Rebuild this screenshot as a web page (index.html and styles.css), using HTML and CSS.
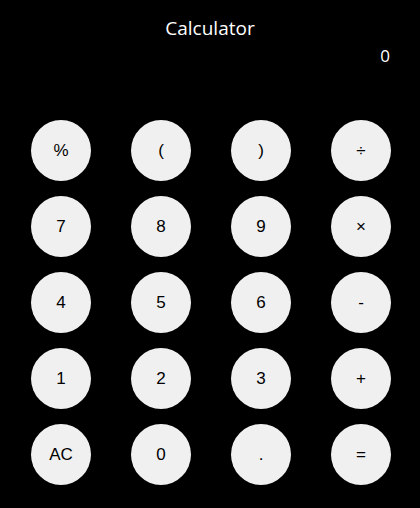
FILE: index.html
```html
<!DOCTYPE html>
<html lang="en">
<head>
    <meta charset="UTF-8">
    <meta name="viewport" content="width=device-width, initial-scale=1.0">
    <title>Calculator</title>
    <link rel="stylesheet" href="styles.css">
</head>
<body>

    <h1 class="title">Calculator</h1>
    <div class="display" id="display">0</div>

    <div class="keys">
        <button>%</button>
        <button>(</button>
        <button>)</button>
        <button>÷</button>
        <button>7</button>
        <button>8</button>
        <button>9</button>
        <button>×</button>
        <button>4</button>
        <button>5</button>
        <button>6</button>
        <button>-</button>
        <button>1</button>
        <button>2</button>
        <button>3</button>
        <button>+</button>
        <button>AC</button>
        <button>0</button>
        <button>.</button>
        <button>=</button>
    </div>

</body>
</html>
```

FILE: styles.css
```css
body {
    margin: 0;
    background-color: #000;
    color: #fff;
    font-family: "Open Sans", "Noto Sans", sans-serif;
}
.title {
    margin: 0;
    padding-top: 14px;
    font-size: 19px;
    font-weight: normal;
    text-align: center;
    line-height: 28px;
}
.display {
    padding-right: 30px;
    font-size: 17px;
    text-align: right;
    line-height: 28px;
    height: 28px;
}
.keys {
    width: 400px;
    margin: 50px 0 0 11px;
    display: grid;
    grid-template-columns: repeat(4, 100px);
    row-gap: 15px;
    justify-items: center;
}
.keys button {
    width: 60px;
    height: 61px;
    border: none;
    border-radius: 50%;
    background-color: #f0f0f0;
    color: #000;
    font-family: "Liberation Sans", Arial, sans-serif;
    font-size: 17px;
    padding: 0;
    cursor: pointer;
}
```
